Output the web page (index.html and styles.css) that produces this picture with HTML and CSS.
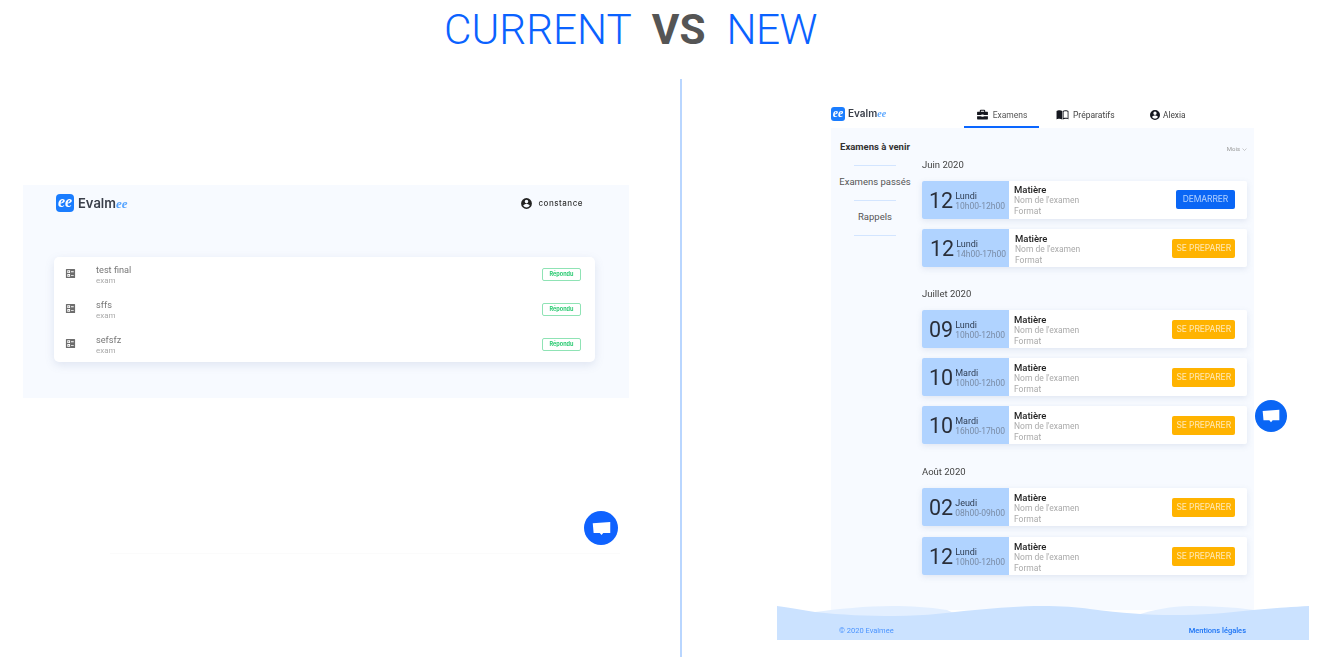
FILE: index.html
```html
<!DOCTYPE html>
<html lang="fr">
<head>
<meta charset="utf-8">
<title>Current vs New</title>
<link rel="stylesheet" href="styles.css">
</head>
<body>
<main class="slide">
  <h1 class="title"><span>CURRENT</span><b>VS</b><span class="title-new">NEW</span></h1>

  <section class="current">
    <div class="old-app">
      <header class="old-head">
        <div class="logo logo-lg"><span class="logo-mark">ee</span><span class="logo-name">Evalm<i>ee</i></span></div>
        <div class="old-user">
          <svg viewBox="0 0 24 24" class="ic-user"><path d="M12 2a10 10 0 1 0 0 20 10 10 0 0 0 0-20zm0 3.200a3.300 3.300 0 1 1 0 6.600 3.300 3.300 0 0 1 0-6.600zm0 14.200a7.300 7.300 0 0 1-6-3.200c0-2 4-3.100 6-3.100s6 1.100 6 3.100a7.300 7.300 0 0 1-6 3.200z"/></svg>
          <span>constance</span>
        </div>
      </header>
      <div class="old-card">
        <div class="old-row">
          <svg viewBox="0 0 24 24" class="ic-list"><path d="M3 2h18a1 1 0 0 1 1 1v18a1 1 0 0 1-1 1H3a1 1 0 0 1-1-1V3a1 1 0 0 1 1-1zm2 3v6h6V5zm2 2h2v2H7zm6 0v2h6V7zM5 13v6h6v-6zm2 2h2v2H7zm6 0v2h6v-2z" fill-rule="evenodd"/></svg>
          <div class="old-txt"><strong>test final</strong><small>exam</small></div>
          <span class="badge">Répondu</span>
        </div>
        <div class="old-row">
          <svg viewBox="0 0 24 24" class="ic-list"><path d="M3 2h18a1 1 0 0 1 1 1v18a1 1 0 0 1-1 1H3a1 1 0 0 1-1-1V3a1 1 0 0 1 1-1zm2 3v6h6V5zm2 2h2v2H7zm6 0v2h6V7zM5 13v6h6v-6zm2 2h2v2H7zm6 0v2h6v-2z" fill-rule="evenodd"/></svg>
          <div class="old-txt"><strong>sffs</strong><small>exam</small></div>
          <span class="badge">Répondu</span>
        </div>
        <div class="old-row">
          <svg viewBox="0 0 24 24" class="ic-list"><path d="M3 2h18a1 1 0 0 1 1 1v18a1 1 0 0 1-1 1H3a1 1 0 0 1-1-1V3a1 1 0 0 1 1-1zm2 3v6h6V5zm2 2h2v2H7zm6 0v2h6V7zM5 13v6h6v-6zm2 2h2v2H7zm6 0v2h6v-2z" fill-rule="evenodd"/></svg>
          <div class="old-txt"><strong>sefsfz</strong><small>exam</small></div>
          <span class="badge">Répondu</span>
        </div>
      </div>
    </div>
    <div class="faint-line"></div>
    <button class="chat chat-old" aria-label="Chat">
      <svg viewBox="0 0 24 24"><path d="M2 6l20-1.500V17h-8l-2 2.500-2-2.500H3z"/></svg>
    </button>
  </section>

  <div class="divider"></div>

  <section class="new">
    <header class="new-head">
      <div class="logo"><span class="logo-mark">ee</span><span class="logo-name">Evalm<i>ee</i></span></div>
      <nav class="tabs">
        <a class="tab tab-active">
          <svg viewBox="0 0 24 24"><path d="M9 3h6a2 2 0 0 1 2 2v2h4a1 1 0 0 1 1 1v5H14v-1h-4v1H2V8a1 1 0 0 1 1-1h4V5a2 2 0 0 1 2-2zm0 2v2h6V5zM2 15h8v1h4v-1h8v5a1 1 0 0 1-1 1H3a1 1 0 0 1-1-1z"/></svg>
          <span>Examens</span>
        </a>
        <a class="tab tab-prep">
          <svg viewBox="0 0 24 24"><path d="M1 5.500C3 4 9 3.500 11.500 5.500V21c-2.500-1.500-8.500-1.500-10.500 0zM12.500 5.500c2.500-2 8.500-1.500 10.500 0V21c-2-1.500-8-1.500-10.500 0zm1.500 1.200V18.600c2-.8 5.500-.8 7.500 0V6.700c-2-1-5.500-1.200-7.500 0z" fill-rule="evenodd"/></svg>
          <span>Préparatifs</span>
        </a>
        <a class="tab tab-user">
          <svg viewBox="0 0 24 24"><path d="M12 2a10 10 0 1 0 0 20 10 10 0 0 0 0-20zm0 3.200a3.300 3.300 0 1 1 0 6.600 3.300 3.300 0 0 1 0-6.600zm0 14.200a7.300 7.300 0 0 1-6-3.200c0-2 4-3.100 6-3.100s6 1.100 6 3.100a7.300 7.300 0 0 1-6 3.200z"/></svg>
          <span>Alexia</span>
        </a>
      </nav>
    </header>

    <div class="panel">
      <aside class="side">
        <a class="side-item side-on">Examens à venir</a>
        <a class="side-item">Examens passés</a>
        <a class="side-item">Rappels</a>
      </aside>
      <div class="content">
        <div class="sort">Mois <svg viewBox="0 0 10 6"><path d="M1 1l4 4 4-4"/></svg></div>

        <h2 class="month month-first">Juin 2020</h2>
        <article class="exam exam-top"><div class="when"><b>12</b><p><span>Lundi</span><em>10h00-12h00</em></p></div><div class="what"><strong>Matière</strong><span>Nom de l'examen</span><span>Format</span></div><a class="btn btn-go">DEMARRER</a></article>
        <article class="exam exam-shift"><div class="when"><b>12</b><p><span>Lundi</span><em>14h00-17h00</em></p></div><div class="what"><strong>Matière</strong><span>Nom de l'examen</span><span>Format</span></div><a class="btn">SE PREPARER</a></article>

        <h2 class="month">Juillet 2020</h2>
        <article class="exam"><div class="when"><b>09</b><p><span>Lundi</span><em>10h00-12h00</em></p></div><div class="what"><strong>Matière</strong><span>Nom de l'examen</span><span>Format</span></div><a class="btn">SE PREPARER</a></article>
        <article class="exam"><div class="when"><b>10</b><p><span>Mardi</span><em>10h00-12h00</em></p></div><div class="what"><strong>Matière</strong><span>Nom de l'examen</span><span>Format</span></div><a class="btn">SE PREPARER</a></article>
        <article class="exam"><div class="when"><b>10</b><p><span>Mardi</span><em>16h00-17h00</em></p></div><div class="what"><strong>Matière</strong><span>Nom de l'examen</span><span>Format</span></div><a class="btn">SE PREPARER</a></article>

        <h2 class="month month-aug">Août 2020</h2>
        <article class="exam exam-gap"><div class="when"><b>02</b><p><span>Jeudi</span><em>08h00-09h00</em></p></div><div class="what"><strong>Matière</strong><span>Nom de l'examen</span><span>Format</span></div><a class="btn">SE PREPARER</a></article>
        <article class="exam"><div class="when"><b>12</b><p><span>Lundi</span><em>10h00-12h00</em></p></div><div class="what"><strong>Matière</strong><span>Nom de l'examen</span><span>Format</span></div><a class="btn">SE PREPARER</a></article>
      </div>
      <button class="chat chat-new" aria-label="Chat">
        <svg viewBox="0 0 24 24"><path d="M2 6l20-1.500V17h-8l-2 2.500-2-2.500H3z"/></svg>
      </button>
    </div>

    <footer class="foot">
      <svg class="wave" viewBox="0 0 532 35" preserveAspectRatio="none">
        <path class="wave-back" d="M38 7C60 4 90 1 115 1C135 1 150 2 170 5L190 14H38z"/>
        <path class="wave-back" d="M360 10C375 5 395 1 413 1C435 1 455 2 477 5V12H360z"/>
        <path class="wave-front" d="M0 1C15 3 25 5 38 7C65 10 90 11 118 11C150 11 175 7 198 5C220 3 245 1 265 1C285 1 300 2 313 4C345 8 370 10 396 10C425 10 450 8 476 5C495 3 515 2 532 1V35H0z"/>
      </svg>
      <span class="foot-txt">© 2020 Evalmee</span>
      <span class="foot-txt foot-link">Mentions légales</span>
    </footer>
  </section>
</main>
</body>
</html>
```

FILE: styles.css
```css
* { box-sizing: border-box; }
html, body { margin: 0; padding: 0; background: #fff; }
body { width: 1336px; height: 657px; overflow: hidden; font-family: Roboto, "Liberation Sans", sans-serif; }

.slide {
  display: grid;
  grid-template-columns: 680px 2px 654px;
  grid-template-rows: 79px 578px;
  width: 1336px;
  height: 657px;
}

.title {
  grid-column: 1 / -1;
  margin: 0;
  padding: 5px 0 0 444px;
  display: flex;
  align-items: flex-start;
  font-family: Roboto, sans-serif;
  font-size: 42.300px;
  line-height: 50px;
  font-weight: 300;
  color: #0a62ff;
}
.title b { margin: 0 21px 0 20px; font-weight: 700; color: #555; }
.title-new { letter-spacing: -.6px; }

/* left: current */
.current { position: relative; padding: 106px 0 0 23px; }
.old-app {
  width: 606px;
  height: 213px;
  padding: 9px 46px 0 31px;
  background: #f7faff;
  filter: blur(.5px);
}
.old-head { display: flex; justify-content: space-between; align-items: center; height: 18px; padding: 0 0 0 2px; }
.old-user { display: flex; align-items: center; gap: 5px; font-size: 8px; font-weight: 500; letter-spacing: .5px; color: #333; font-family: Inter, sans-serif; }
.ic-user { width: 13px; height: 13px; fill: #222; }

.logo { display: flex; align-items: center; gap: 3px; font-family: Inter, sans-serif; }
.logo-mark {
  width: 14px; height: 14px;
  border-radius: 3px;
  background: #1a7dff;
  color: #fff;
  font: italic 700 12px/12px "Liberation Serif", serif;
  text-align: center;
}
.logo-name { font-size: 10px; line-height: 14px; font-weight: 600; color: #3a3f4a; }
.logo-name i { color: #5aa6ff; font-family: "Liberation Serif", serif; font-weight: 700; }
.logo-lg { gap: 4px; }
.logo-lg .logo-mark { width: 18px; height: 18px; font-size: 16px; line-height: 15px; border-radius: 4px; }
.logo-lg .logo-name { font-size: 13px; line-height: 18px; }

.old-card {
  margin: 45px 0 0;
  width: 541px;
  height: 105px;
  background: #fff;
  border-radius: 5px;
  box-shadow: 0 3px 10px rgba(90,110,160,.15);
}
.old-row { display: flex; align-items: center; height: 35px; padding: 0 14px 0 11px; }
.ic-list { width: 11px; height: 11px; margin-top: -2px; fill: #6d6d6d; flex: none; }
.old-txt { flex: 1; display: flex; flex-direction: column; margin-left: 20px; }
.old-txt strong { font-size: 9.200px; line-height: 12px; font-weight: 400; color: #777; }
.old-txt small { font-size: 8px; line-height: 9px; color: #aaa; }
.badge {
  width: 39px; height: 13px;
  border: 1px solid #8fe3b5;
  border-radius: 2px;
  font: 700 5.500px/11px Inter, sans-serif;
  text-align: center;
  color: #2ecb74;
  background: #fff;
}
.faint-line { margin: 155px 0 0 87px; width: 510px; height: 1px; background: #fbfbfb; }

.chat {
  position: absolute;
  width: 34px; height: 34px;
  border: 0; padding: 6.500px;
  border-radius: 50%;
  background: #0f62fe;
}
.chat svg { display: block; width: 21px; height: 21px; fill: #fff; }
.chat-old { left: 584px; top: 432px; }
.chat-new { left: 424px; top: 272px; width: 32px; height: 32px; padding: 6px; background: #0a66f5; }
.chat-new svg { width: 20px; height: 20px; }

.divider { background: #b9d6ff; }

/* right: new */
.new { padding: 0 0 0 95px; }
.new-head {
  display: flex;
  align-items: flex-end;
  height: 49px;
  margin-left: 54px;
  filter: blur(.4px);
}
.new-head .logo { width: 133px; align-self: flex-start; margin-top: 27px; }
.tabs { display: flex; }
.tab { display: flex; align-items: center; gap: 4px; height: 23px; padding-bottom: 4px; font-size: 8.500px; color: #555; }
.tab svg { width: 13px; height: 13px; fill: #15171f; }
.tab-active { width: 75px; justify-content: center; border-bottom: 2px solid #0a66ff; padding-bottom: 2px; }
.tab-prep { width: 95px; padding-left: 17px; color: #444; }
.tab-user { padding-left: 15px; gap: 2px; padding-bottom: 3px; font-size: 8.300px; color: #444; }
.tab-user svg { width: 12px; height: 12px; }

.panel {
  position: relative;
  display: flex;
  width: 423px;
  height: 482px;
  margin-left: 54px;
  background: #f7faff;
  filter: blur(.4px);
}
.side { width: 91px; padding-top: 10px; display: flex; flex-direction: column; }
.side-item {
  width: 88px;
  height: 35px;
  padding: 3px 0 0;
  text-align: center;
  font-size: 9.500px;
  line-height: 12px;
  color: #555;
  position: relative;
}
.side-item::after {
  content: "";
  position: absolute;
  left: 23px; bottom: 7px;
  width: 42px; height: 1px;
  background: #d3e5ff;
}
.side-on { font-weight: 700; color: #333; }

.content { position: relative; width: 325px; }
.sort { position: absolute; right: 0; top: 17px; display: flex; align-items: center; gap: 2px; font-size: 6px; line-height: 8px; color: #999; }
.sort svg { width: 5px; height: 3px; fill: none; stroke: #999; stroke-width: 1; }

.month { margin: 21px 0 10px; font-size: 9.500px; line-height: 12px; font-weight: 400; color: #444; }
.month-first { margin-top: 31px; }
.month-aug { margin-top: 22px; }

.exam {
  display: flex;
  align-items: center;
  height: 38px;
  margin-bottom: 10px;
  background: #fff;
  border-radius: 2px;
  box-shadow: 0 2px 6px rgba(90,110,160,.14);
}
.exam-gap { margin-bottom: 11px; }
.when {
  flex: none;
  display: flex;
  align-items: center;
  gap: 2px;
  width: 87px; height: 38px;
  padding: 2px 0 0 7px;
  background: #b0d3ff;
  border-radius: 2px 0 0 2px;
}
.when b { font-size: 21.500px; font-weight: 400; color: #2a2f3a; line-height: 26px; }
.when p { margin: 0; display: flex; flex-direction: column; }
.when span { font-size: 9px; line-height: 10px; color: #2f3d52; }
.when em { font-size: 8.500px; line-height: 10px; font-style: normal; color: #7a8ca6; }
.what { flex: 1; display: flex; flex-direction: column; padding: 2px 0 0 5px; }
.what strong { font-size: 9.500px; line-height: 11px; font-weight: 500; color: #222; }
.what span { font-size: 8.500px; line-height: 11px; color: #aaa; }
.exam-top .what { padding-top: 0; }
.exam-shift .what { padding-left: 6px; }
.exam-shift .when { padding-left: 8px; }
.btn {
  margin-right: 12px;
  height: 19px;
  padding: 0 4px;
  border-radius: 2px;
  background: #ffb300;
  color: #ffe9b8;
  font-size: 8.500px;
  line-height: 19px;
  font-family: Inter, sans-serif;
  letter-spacing: -.1px;
}
.btn-go { width: 59px; margin-top: -1px; padding: 0; text-align: center; background: #0a66f5; color: #b4d2ff; }

.foot {
  position: relative;
  display: flex;
  justify-content: space-between;
  align-items: flex-end;
  width: 532px;
  height: 35px;
  margin-top: -5px;
  padding: 0 63px 4px 62px;
  filter: blur(.3px);
}
.wave { position: absolute; left: 0; top: 0; width: 532px; height: 35px; display: block; }
.wave-back { fill: #e3efff; }
.wave-front { fill: #cbe2ff; }
.foot-txt { position: relative; font-size: 7.500px; line-height: 10px; color: #4b94ff; }
.foot-link { color: #1a73f5; font-weight: 500; }
```
